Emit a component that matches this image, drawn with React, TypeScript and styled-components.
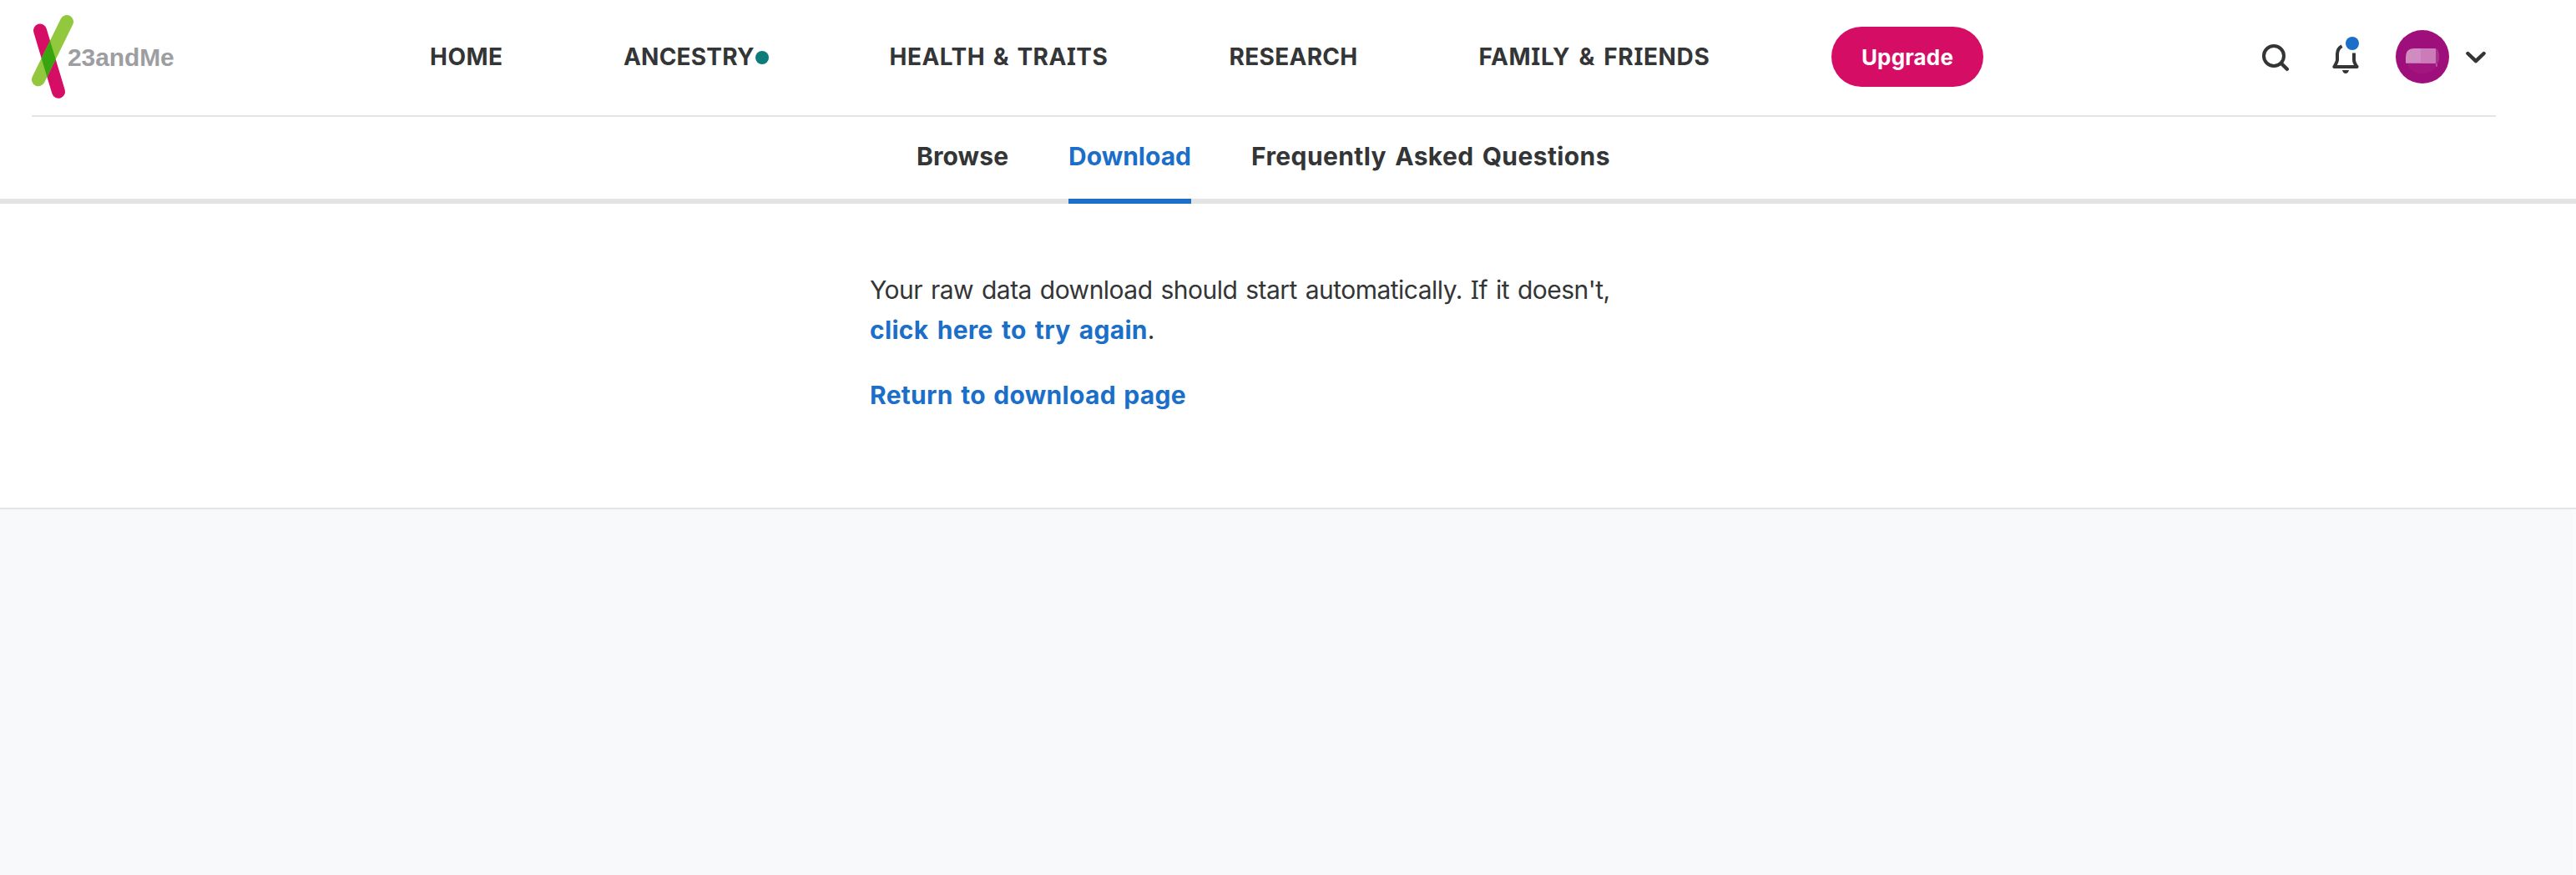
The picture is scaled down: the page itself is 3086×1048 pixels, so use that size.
import React from "react";
import styled, { createGlobalStyle } from "styled-components";

const ink = "#333536";
const blue = "#1b6fc8";
const rule = "#e3e4e5";

const GlobalStyle = createGlobalStyle`
  * { box-sizing: border-box; }
  body {
    margin: 0;
    background: #f8f9fb;
    color: ${ink};
    font-family: Inter, "Noto Sans", sans-serif;
  }
  a { color: inherit; text-decoration: none; }
`;

const Page = styled.div`
  display: flex;
  flex-direction: column;
  height: 1048px;
  overflow: hidden;
`;

const Header = styled.header`
  display: flex;
  align-items: center;
  height: 140px;
  margin-left: 38px;
  margin-right: 96px;
  padding-right: 12px;
  border-bottom: 2px solid ${rule};
`;

const Top = styled.div`
  background: #fff;
`;

const Logo = styled.a`
  display: flex;
  align-items: center;
  width: 477px;
`;

const LogoMark = styled.svg`
  display: block;
  flex: none;
`;

const LogoText = styled.span`
  margin-left: -8px;
  color: #9c9ea1;
  font: 700 30px/34px "Liberation Sans", Arial, sans-serif;
  letter-spacing: -0.1px;
`;

const MainNav = styled.nav`
  display: flex;
  align-items: center;
  gap: 144px;
`;

const NavItem = styled.a<{ $width: number; $track: number; $word?: number }>`
  display: flex;
  align-items: center;
  justify-content: space-between;
  width: ${(p) => p.$width}px;
  padding-bottom: 2px;
  font-size: 28px;
  line-height: 34px;
  font-weight: 700;
  letter-spacing: ${(p) => p.$track}px;
  word-spacing: ${(p) => p.$word ?? 0}px;
  white-space: nowrap;
`;

const NavText = styled.span`
  padding-left: 0.5px;
`;

const CapI = styled.span`
  font-family: "Noto Sans", sans-serif;
  line-height: 1;
`;

const NewDot = styled.i`
  width: 16px;
  height: 16px;
  flex: none;
  margin-top: 2px;
  border-radius: 50%;
  background: #0b7c7b;
`;

const Upgrade = styled.button`
  width: 182px;
  height: 72px;
  margin-top: -2px;
  padding: 2px 0 0;
  border: 0;
  border-radius: 36px;
  background: #d50d65;
  color: #fff;
  font: 700 26px/32px Inter, sans-serif;
  letter-spacing: 0.15px;
`;

const Tools = styled.div`
  display: flex;
  align-items: center;
  margin-left: auto;
  margin-top: -2px;
`;

const Icon = styled.svg<{ $gap?: number }>`
  display: block;
  flex: none;
  margin-left: ${(p) => p.$gap ?? 0}px;
  fill: none;
  stroke: ${ink};
  stroke-width: 4;
  stroke-linecap: round;
  stroke-linejoin: round;
`;

const SubNav = styled.nav`
  display: flex;
  justify-content: flex-start;
  gap: 72px;
  height: 104px;
  padding-left: 1098px;
  box-shadow: inset 0 -6px ${rule};
`;

const Tab = styled.a<{ $active?: boolean; $width: number; $track?: number; $word?: number }>`
  width: ${(p) => p.$width}px;
  height: 104px;
  padding-top: 29px;
  border-bottom: 6px solid ${(p) => (p.$active ? blue : "transparent")};
  color: ${(p) => (p.$active ? blue : ink)};
  font-size: 30px;
  line-height: 36px;
  font-weight: 700;
  letter-spacing: ${(p) => p.$track ?? 0}px;
  word-spacing: ${(p) => p.$word ?? 0}px;
  white-space: nowrap;
`;

const Content = styled.main`
  height: 366px;
  padding: 79px 0 0 1042px;
  border-bottom: 2px solid ${rule};
`;

const Message = styled.p`
  margin: 0 0 30px;
  font-size: 30px;
  line-height: 48px;
  letter-spacing: -0.52px;
  word-spacing: 2px;
`;

const Link = styled.a<{ $track: number; $word: number }>`
  color: ${blue};
  font-weight: 700;
  letter-spacing: ${(p) => p.$track}px;
  word-spacing: ${(p) => p.$word}px;
`;

const Rest = styled.div`
  flex: 1;
  background: #f8f9fb;
  border-right: 3px solid #fafbfc;
`;

export default function App() {
  return (
    <Page>
      <GlobalStyle />
      <Top>
        <Header>
          <Logo href="#">
            <LogoMark width="51" height="102" viewBox="38 18 51 102">
              <defs>
                <clipPath id="green-bar">
                  <rect x="-8" y="-8" width="93.2" height="16" rx="8" transform="translate(80 26) rotate(116.1)" />
                </clipPath>
              </defs>
              <path d="M48 36.5 70 109.8" stroke="#d50d65" strokeWidth="16" strokeLinecap="round" />
              <path d="M80 26 46 95.3" stroke="#92c83e" strokeWidth="16" strokeLinecap="round" />
              <path d="M48 36.5 70 109.8" stroke="#38a510" strokeWidth="16" strokeLinecap="round" clipPath="url(#green-bar)" />
            </LogoMark>
            <LogoText>23andMe</LogoText>
          </Logo>
          <MainNav>
            <NavItem href="#" $width={88} $track={0.5}>HOME</NavItem>
            <NavItem href="#" $width={174} $track={0.2}>
              ANCESTRY
              <NewDot />
            </NavItem>
            <NavItem href="#" $width={263} $track={0.5} $word={2.3}>
              <NavText>HEALTH &amp; TRA<CapI>I</CapI>TS</NavText>
            </NavItem>
            <NavItem href="#" $width={155} $track={0.3}>
              <NavText>RESEARCH</NavText>
            </NavItem>
            <NavItem href="#" $width={279} $track={0.65} $word={3.1}>
              <NavText>FAM<CapI>I</CapI>LY &amp; FR<CapI>I</CapI>ENDS</NavText>
            </NavItem>
            <Upgrade>Upgrade</Upgrade>
          </MainNav>
          <Tools>
            <Icon width="32" height="40" viewBox="2710 48 32 40">
              <circle cx="2724" cy="67" r="12" />
              <path d="m2733 76 6.8 6.8" strokeWidth="4.4" />
            </Icon>
            <Icon $gap={52} width="34" height="48" viewBox="2794 44 34 48">
              <path d="M2805.6 55.2q-5.6 2.8-5.6 9.8v6.5q0 2.5-3.6 8.5h27.2q-3.6-5-3.6-8.5V63.5" strokeLinecap="butt" />
              <path d="M2806 84h8q-1 4-4 4t-4-4z" fill={ink} stroke="none" />
              <circle cx="2818" cy="52" r="8" fill={blue} stroke="none" />
            </Icon>
            <Icon $gap={42} width="64" height="64" viewBox="2870 36 64 64">
              <g stroke="none">
                <circle cx="2902" cy="68" r="32" fill="#9e0f7c" />
                <ellipse cx="2902" cy="75" rx="18" ry="13" fill="#a2177f" />
                <path d="M2912 58h6q4 2 4 9t-2 8h-8z" fill="#a93590" />
                <path d="M2882 75.7V69q0-11 10-11h26v17.7z" fill="#d08bc0" />
                <path d="M2900 58h18v17.7h-18z" fill="#cb7cb8" />
                <path d="M2918 75.7h2v4h-2z" fill="#b9519f" />
              </g>
            </Icon>
            <Icon $gap={20} width="24" height="20" viewBox="2954 58 24 20">
              <path d="m2956.4 64 9.6 9.2 9.6-9.2" strokeWidth="4.4" />
            </Icon>
          </Tools>
        </Header>
        <SubNav>
          <Tab href="#" $width={110} $track={0.1}>Browse</Tab>
          <Tab href="#" $width={147} $active>Download</Tab>
          <Tab href="#" $width={430} $track={0.4} $word={2.6}>Frequently Asked Questions</Tab>
        </SubNav>
        <Content>
          <Message>
            Your raw data download should start automatically. <CapI>I</CapI>f it doesn't,
            <br />
            <Link href="#" $track={0.3} $word={2.8}>click here to try again</Link>.
          </Message>
          <Message>
            <Link href="#" $track={0.3} $word={2}>Return to download page</Link>
          </Message>
        </Content>
      </Top>
      <Rest />
    </Page>
  );
}
